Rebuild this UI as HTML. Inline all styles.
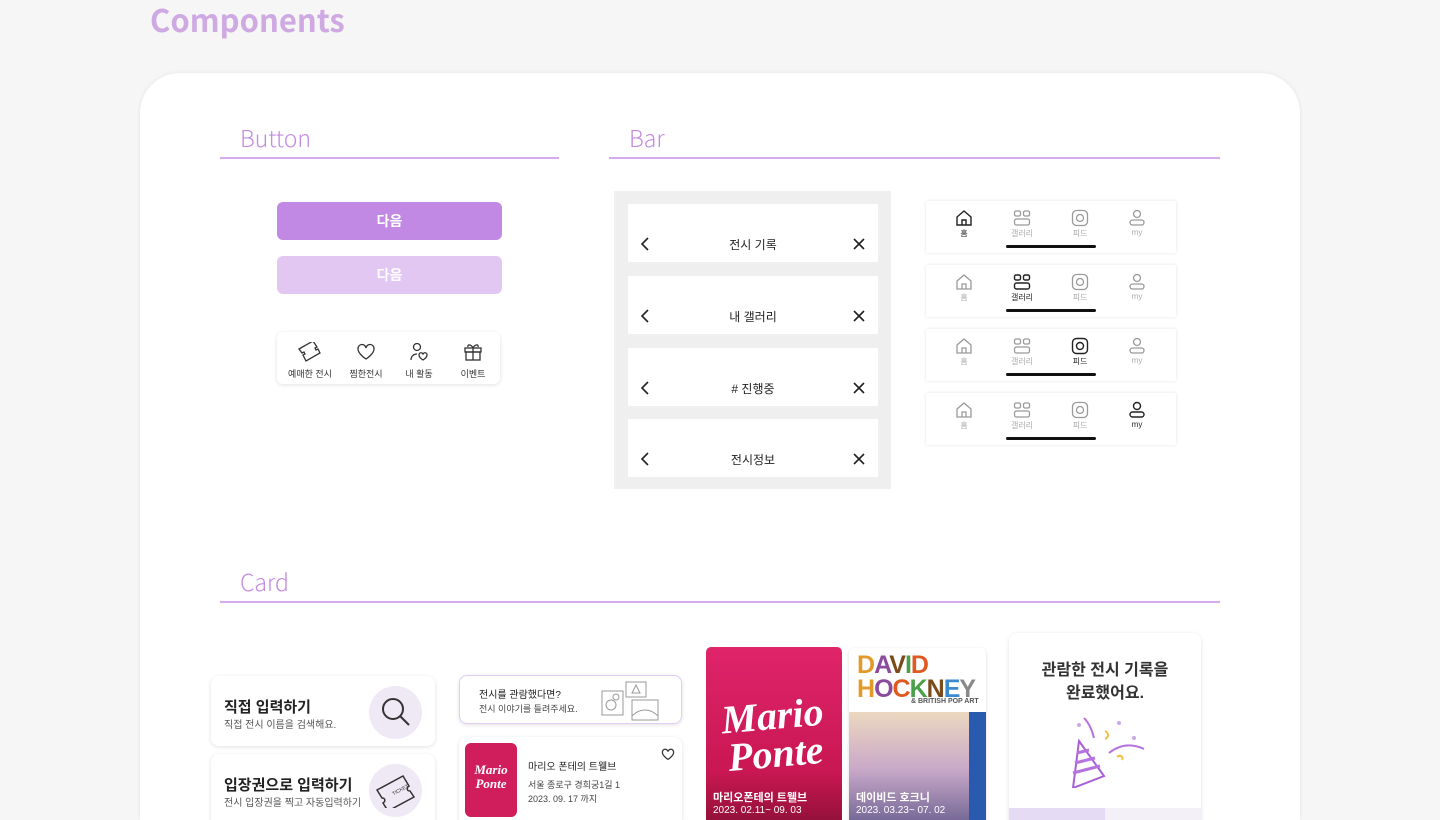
<!DOCTYPE html>
<html><head><meta charset="utf-8"><style>
*{margin:0;padding:0;box-sizing:border-box}
html,body{width:1440px;height:820px;overflow:hidden}
body{background:#f6f6f6;font-family:"Liberation Sans","Noto Sans CJK KR",sans-serif;position:relative;color:#222}
.a{position:absolute}
.main{left:140px;top:73px;width:1160px;height:747px;background:#fff;border-radius:40px 40px 0 0;box-shadow:0 0 4px rgba(0,0,0,.08)}
.sec{font-size:23px;color:#c48be2;font-family:"Noto Sans CJK KR",sans-serif;font-weight:300;line-height:30px}
.line{height:2px;background:#d7a9ef}
.btn{left:277px;width:225px;height:38px;border-radius:6px;color:#fff;font-size:14px;font-weight:bold;text-align:center;line-height:38px;font-family:"Noto Sans CJK KR",sans-serif}
.wb{left:628px;width:250px;height:58px;background:#fff;font-size:12px;color:#222}
.wb .t{position:absolute;left:0;right:0;top:32px;text-align:center}
.wb svg{position:absolute;top:33px}
.tb{left:926px;width:250px;height:52px;background:#fff;box-shadow:0 0 3px rgba(0,0,0,.12)}
.tb .i{position:absolute;top:8px;width:40px;text-align:center;font-size:8px;color:#aaa}
.tb .i svg{display:block;margin:0 auto 1px}
.tb .u{position:absolute;left:80px;top:44px;width:90px;height:3px;background:#111;border-radius:2px}
.card{background:#fff;border-radius:8px;box-shadow:0 1px 4px rgba(0,0,0,.12)}
.nw{white-space:nowrap}
</style></head><body>
<div class="a" style="left:150px;top:-2px;font-size:31px;font-weight:bold;color:#cfa9e2;font-family:'Noto Sans CJK KR',sans-serif;line-height:42px">Components</div>
<div class="a main"></div>

<div class="a sec" style="left:240px;top:122px">Button</div>
<div class="a line" style="left:220px;top:157px;width:339px"></div>
<div class="a sec" style="left:629px;top:122px">Bar</div>
<div class="a line" style="left:609px;top:157px;width:611px"></div>
<div class="a sec" style="left:240px;top:566px">Card</div>
<div class="a line" style="left:220px;top:601px;width:1000px"></div>

<div class="a btn" style="top:202px;background:#c189e3">다음</div>
<div class="a btn" style="top:256px;background:#e2c7f3">다음</div>
<div class="a card nw" style="left:277px;top:332px;width:223px;height:52px;border-radius:6px">
 <svg class="a" style="left:20px;top:10px" width="26" height="20" viewBox="0 0 26 20" fill="none" stroke="#333" stroke-width="1.3"><path d="M3 10l14-8 4 6-2 1 1 2 2-1 2 4-14 8-3-6 2-1-1-2-2 1z" transform="translate(-1 -3)"/></svg>
 <svg class="a" style="left:79px;top:11px" width="20" height="18" viewBox="0 0 20 18" fill="none" stroke="#333" stroke-width="1.3"><path d="M10 16S2 11 2 6a4 4 0 0 1 8-1 4 4 0 0 1 8 1c0 5-8 10-8 10z"/></svg>
 <svg class="a" style="left:131px;top:10px" width="22" height="20" viewBox="0 0 22 20" fill="none" stroke="#333" stroke-width="1.3"><circle cx="9" cy="5" r="3.5"/><path d="M3 18c0-4 3-6 6-6"/><path d="M15 18s-4-2.5-4-5a2 2 0 0 1 4-.5 2 2 0 0 1 4 .5c0 2.5-4 5-4 5z"/></svg>
 <svg class="a" style="left:185px;top:10px" width="22" height="20" viewBox="0 0 22 20" fill="none" stroke="#333" stroke-width="1.3"><rect x="3" y="6" width="16" height="4"/><rect x="4" y="10" width="14" height="8"/><path d="M11 6v12M11 6c-2-4-6-4-5-1M11 6c2-4 6-4 5-1"/></svg>
 <div class="a" style="left:0;top:35px;width:223px;font-size:9px;color:#333">
  <span class="a" style="left:6px;width:54px;text-align:center">예매한 전시</span>
  <span class="a" style="left:62px;width:54px;text-align:center">찜한전시</span>
  <span class="a" style="left:115px;width:54px;text-align:center">내 활동</span>
  <span class="a" style="left:169px;width:54px;text-align:center">이벤트</span>
 </div>
</div>

<div class="a" style="left:614px;top:191px;width:277px;height:298px;background:#efefef"></div>
<div class="a wb" style="top:204px"><svg style="left:12px" width="10" height="14" viewBox="0 0 10 14" fill="none" stroke="#222" stroke-width="1.6"><path d="M8 1L2 7l6 6"/></svg><div class="t">전시 기록</div><svg style="left:225px;top:34px" width="12" height="12" viewBox="0 0 12 12" stroke="#222" stroke-width="1.6"><path d="M1 1l10 10M11 1L1 11"/></svg></div>
<div class="a wb" style="top:276px"><svg style="left:12px" width="10" height="14" viewBox="0 0 10 14" fill="none" stroke="#222" stroke-width="1.6"><path d="M8 1L2 7l6 6"/></svg><div class="t">내 갤러리</div><svg style="left:225px;top:34px" width="12" height="12" viewBox="0 0 12 12" stroke="#222" stroke-width="1.6"><path d="M1 1l10 10M11 1L1 11"/></svg></div>
<div class="a wb" style="top:348px"><svg style="left:12px" width="10" height="14" viewBox="0 0 10 14" fill="none" stroke="#222" stroke-width="1.6"><path d="M8 1L2 7l6 6"/></svg><div class="t"># 진행중</div><svg style="left:225px;top:34px" width="12" height="12" viewBox="0 0 12 12" stroke="#222" stroke-width="1.6"><path d="M1 1l10 10M11 1L1 11"/></svg></div>
<div class="a wb" style="top:419px"><svg style="left:12px" width="10" height="14" viewBox="0 0 10 14" fill="none" stroke="#222" stroke-width="1.6"><path d="M8 1L2 7l6 6"/></svg><div class="t">전시정보</div><svg style="left:225px;top:34px" width="12" height="12" viewBox="0 0 12 12" stroke="#222" stroke-width="1.6"><path d="M1 1l10 10M11 1L1 11"/></svg></div>

<div class="a tb" style="top:201px">
 <div class="i" style="left:18px;color:#222"><svg width="18" height="18" viewBox="0 0 18 18" fill="none" stroke="#222" stroke-width="1.4"><path d="M2 8l7-6 7 6v8H2z"/><path d="M7 16v-5h4v5"/></svg>홈</div>
 <div class="i" style="left:76px"><svg width="18" height="18" viewBox="0 0 18 18" fill="none" stroke="#999" stroke-width="1.3"><rect x="1.5" y="2" width="6" height="5" rx="1.5"/><rect x="10.5" y="2" width="6" height="5" rx="1.5"/><rect x="1.5" y="10" width="15" height="6" rx="2"/></svg>갤러리</div>
 <div class="i" style="left:134px"><svg width="18" height="18" viewBox="0 0 18 18" fill="none" stroke="#999" stroke-width="1.3"><rect x="1.5" y="1.5" width="15" height="15" rx="4"/><circle cx="9" cy="9" r="3.5"/></svg>피드</div>
 <div class="i" style="left:191px"><svg width="18" height="18" viewBox="0 0 18 18" fill="none" stroke="#999" stroke-width="1.3"><circle cx="9" cy="5" r="3.5"/><rect x="2" y="11" width="14" height="5" rx="2.5"/></svg>my</div>
 <div class="u"></div>
</div>
<div class="a tb" style="top:265px">
 <div class="i" style="left:18px"><svg width="18" height="18" viewBox="0 0 18 18" fill="none" stroke="#999" stroke-width="1.3"><path d="M2 8l7-6 7 6v8H2z"/><path d="M7 16v-5h4v5"/></svg>홈</div>
 <div class="i" style="left:76px;color:#222"><svg width="18" height="18" viewBox="0 0 18 18" fill="none" stroke="#222" stroke-width="1.4"><rect x="1.5" y="2" width="6" height="5" rx="1.5"/><rect x="10.5" y="2" width="6" height="5" rx="1.5"/><rect x="1.5" y="10" width="15" height="6" rx="2"/></svg>갤러리</div>
 <div class="i" style="left:134px"><svg width="18" height="18" viewBox="0 0 18 18" fill="none" stroke="#999" stroke-width="1.3"><rect x="1.5" y="1.5" width="15" height="15" rx="4"/><circle cx="9" cy="9" r="3.5"/></svg>피드</div>
 <div class="i" style="left:191px"><svg width="18" height="18" viewBox="0 0 18 18" fill="none" stroke="#999" stroke-width="1.3"><circle cx="9" cy="5" r="3.5"/><rect x="2" y="11" width="14" height="5" rx="2.5"/></svg>my</div>
 <div class="u"></div>
</div>
<div class="a tb" style="top:329px">
 <div class="i" style="left:18px"><svg width="18" height="18" viewBox="0 0 18 18" fill="none" stroke="#999" stroke-width="1.3"><path d="M2 8l7-6 7 6v8H2z"/><path d="M7 16v-5h4v5"/></svg>홈</div>
 <div class="i" style="left:76px"><svg width="18" height="18" viewBox="0 0 18 18" fill="none" stroke="#999" stroke-width="1.3"><rect x="1.5" y="2" width="6" height="5" rx="1.5"/><rect x="10.5" y="2" width="6" height="5" rx="1.5"/><rect x="1.5" y="10" width="15" height="6" rx="2"/></svg>갤러리</div>
 <div class="i" style="left:134px;color:#222"><svg width="18" height="18" viewBox="0 0 18 18" fill="none" stroke="#222" stroke-width="1.4"><rect x="1.5" y="1.5" width="15" height="15" rx="4"/><circle cx="9" cy="9" r="3.5"/></svg>피드</div>
 <div class="i" style="left:191px"><svg width="18" height="18" viewBox="0 0 18 18" fill="none" stroke="#999" stroke-width="1.3"><circle cx="9" cy="5" r="3.5"/><rect x="2" y="11" width="14" height="5" rx="2.5"/></svg>my</div>
 <div class="u"></div>
</div>
<div class="a tb" style="top:393px">
 <div class="i" style="left:18px"><svg width="18" height="18" viewBox="0 0 18 18" fill="none" stroke="#999" stroke-width="1.3"><path d="M2 8l7-6 7 6v8H2z"/><path d="M7 16v-5h4v5"/></svg>홈</div>
 <div class="i" style="left:76px"><svg width="18" height="18" viewBox="0 0 18 18" fill="none" stroke="#999" stroke-width="1.3"><rect x="1.5" y="2" width="6" height="5" rx="1.5"/><rect x="10.5" y="2" width="6" height="5" rx="1.5"/><rect x="1.5" y="10" width="15" height="6" rx="2"/></svg>갤러리</div>
 <div class="i" style="left:134px"><svg width="18" height="18" viewBox="0 0 18 18" fill="none" stroke="#999" stroke-width="1.3"><rect x="1.5" y="1.5" width="15" height="15" rx="4"/><circle cx="9" cy="9" r="3.5"/></svg>피드</div>
 <div class="i" style="left:191px;color:#222"><svg width="18" height="18" viewBox="0 0 18 18" fill="none" stroke="#222" stroke-width="1.4"><circle cx="9" cy="5" r="3.5"/><rect x="2" y="11" width="14" height="5" rx="2.5"/></svg>my</div>
 <div class="u"></div>
</div>

<div class="a card nw" style="left:211px;top:676px;width:224px;height:70px">
 <div class="a" style="left:13px;top:20px;font-size:15px;font-weight:bold;color:#222">직접 입력하기</div>
 <div class="a" style="left:13px;top:40px;font-size:10px;color:#555">직접 전시 이름을 검색해요.</div>
 <div class="a" style="left:158px;top:10px;width:53px;height:53px;border-radius:50%;background:#efe8f5"></div>
 <svg class="a" style="left:167px;top:18px" width="36" height="36" viewBox="0 0 36 36" fill="none" stroke="#333" stroke-width="2"><circle cx="15" cy="15" r="10"/><path d="M22 22l9 9"/></svg>
</div>
<div class="a card nw" style="left:211px;top:754px;width:224px;height:80px">
 <div class="a" style="left:13px;top:20px;font-size:15px;font-weight:bold;color:#222">입장권으로 입력하기</div>
 <div class="a" style="left:13px;top:40px;font-size:10px;color:#555">전시 입장권을 찍고 자동입력하기</div>
 <div class="a" style="left:158px;top:10px;width:53px;height:53px;border-radius:50%;background:#efe8f5"></div>
 <svg class="a" style="left:162px;top:18px" width="46" height="36" viewBox="0 0 46 36" fill="none" stroke="#333" stroke-width="1.5"><path d="M4 18l26-14 6 10c-3 2-2 5 1 5l4 6-26 14-5-8c3-2 2-5-1-5z"/><text x="18" y="22" font-size="5" fill="#333" stroke="none" transform="rotate(-28 22 18)">TICKET</text></svg>
</div>
<div class="a card nw" style="left:459px;top:675px;width:223px;height:49px;border:1px solid #e3cdf4">
 <div class="a" style="left:19px;top:10px;font-size:10px;color:#222">전시를 관람했다면?</div>
 <div class="a" style="left:19px;top:26px;font-size:9px;color:#444">전시 이야기를 들려주세요.</div>
 <svg class="a" style="left:141px;top:5px" width="60" height="40" viewBox="0 0 60 40" fill="none" stroke="#999" stroke-width="1"><rect x="1" y="10" width="21" height="24"/><circle cx="10" cy="24" r="5"/><circle cx="15" cy="16" r="3"/><rect x="25" y="1" width="20" height="15"/><path d="M35 4l-4 8h8z"/><rect x="31" y="19" width="26" height="20"/><path d="M31 35c8-8 18-8 26 0"/></svg>
</div>
<div class="a card nw" style="left:459px;top:737px;width:223px;height:90px">
 <div class="a" style="left:6px;top:6px;width:52px;height:74px;border-radius:6px;background:#d01d5c;color:#fff;font:italic bold 13px 'Liberation Serif',serif;text-align:center;padding-top:20px;line-height:14px">Mario<br>Ponte</div>
 <div class="a" style="left:69px;top:21px;font-size:10px;color:#222">마리오 폰테의 트웰브</div>
 <div class="a" style="left:69px;top:41px;font-size:9px;color:#444">서울 종로구 경희궁1길 1</div>
 <div class="a" style="left:69px;top:55px;font-size:9px;color:#444">2023. 09. 17 까지</div>
 <svg class="a" style="left:202px;top:11px" width="14" height="13" viewBox="0 0 20 18" fill="none" stroke="#333" stroke-width="1.8"><path d="M10 16S2 11 2 6a4 4 0 0 1 8-1 4 4 0 0 1 8 1c0 5-8 10-8 10z"/></svg>
</div>

<div class="a nw" style="left:706px;top:647px;width:136px;height:180px;border-radius:5px;background:linear-gradient(#e0246a,#c81752 70%,#8e1038);overflow:hidden">
 <div class="a" style="left:0;top:50px;width:136px;text-align:center;color:#fff;font:italic bold 40px 'Liberation Serif',serif;line-height:38px;transform:rotate(-5deg)">Mario<br>Ponte</div>
 <div class="a" style="left:7px;top:142px;font-size:11px;font-weight:bold;color:#fff">마리오폰테의 트웰브</div>
 <div class="a" style="left:7px;top:158px;font-size:10px;color:#fff">2023. 02.11~ 09. 03</div>
</div>
<div class="a nw" style="left:849px;top:648px;width:137px;height:180px;border-radius:5px;background:#fff;box-shadow:0 1px 3px rgba(0,0,0,.15);overflow:hidden">
 <div class="a" style="left:8px;top:5px;font:bold 25px/24px 'Liberation Sans',sans-serif;letter-spacing:-1px"><span style="color:#e39a2a">D</span><span style="color:#8b4a9b">A</span><span style="color:#7a4a1a">V</span><span style="color:#4aa04a">I</span><span style="color:#e05a20">D</span><br><span style="color:#e39a2a">H</span><span style="color:#8b4a9b">O</span><span style="color:#e05a20">C</span><span style="color:#4aa04a">K</span><span style="color:#7a4a1a">N</span><span style="color:#3a8ad0">E</span><span style="color:#888">Y</span></div>
 <div class="a" style="left:62px;top:50px;font-size:7px;font-weight:bold;color:#555">&amp; BRITISH POP ART</div>
 <div class="a" style="left:0;top:64px;width:137px;height:116px;background:linear-gradient(#ecd8c0,#c8a8c8 50%,#6a6090)"></div>
 <div class="a" style="left:120px;top:64px;width:17px;height:116px;background:#2a5ab0"></div>
 <div class="a" style="left:7px;top:141px;font-size:11px;font-weight:bold;color:#fff">데이비드 호크니</div>
 <div class="a" style="left:7px;top:157px;font-size:10px;color:#fff">2023. 03.23~ 07. 02</div>
</div>

<div class="a card" style="left:1009px;top:633px;width:192px;height:200px">
 <div class="a" style="left:0;top:26px;width:192px;text-align:center;font-size:16px;font-weight:bold;color:#333;line-height:23px">관람한 전시 기록을<br>완료했어요.</div>
 <svg class="a" style="left:60px;top:80px" width="80" height="75" viewBox="0 0 80 75" fill="none" stroke="#b673e0" stroke-width="2"><path d="M10 28l25 35-31 12z" stroke="#a860d8"/><path d="M8 40l12 -3M6 50l20-5M4 60l27-7" stroke="#b673e0" stroke-width="3"/><path d="M15 5c5 5 8 12 10 20M40 40c10-8 22-10 35-4" /><path d="M36 18c4 2 4 6 0 8M48 44c3-3 7 0 5 3" stroke="#f0c040"/><circle cx="50" cy="10" r="2" fill="#c8a8e8" stroke="none"/><circle cx="10" cy="12" r="2" fill="#c8a8e8" stroke="none"/><circle cx="65" cy="25" r="2" fill="#c8a8e8" stroke="none"/></svg>
 <div class="a" style="left:0;top:175px;width:96px;height:25px;background:#e6dbf5"></div>
 <div class="a" style="left:96px;top:175px;width:96px;height:25px;background:#f3f0f7"></div>
</div>
</body></html>
